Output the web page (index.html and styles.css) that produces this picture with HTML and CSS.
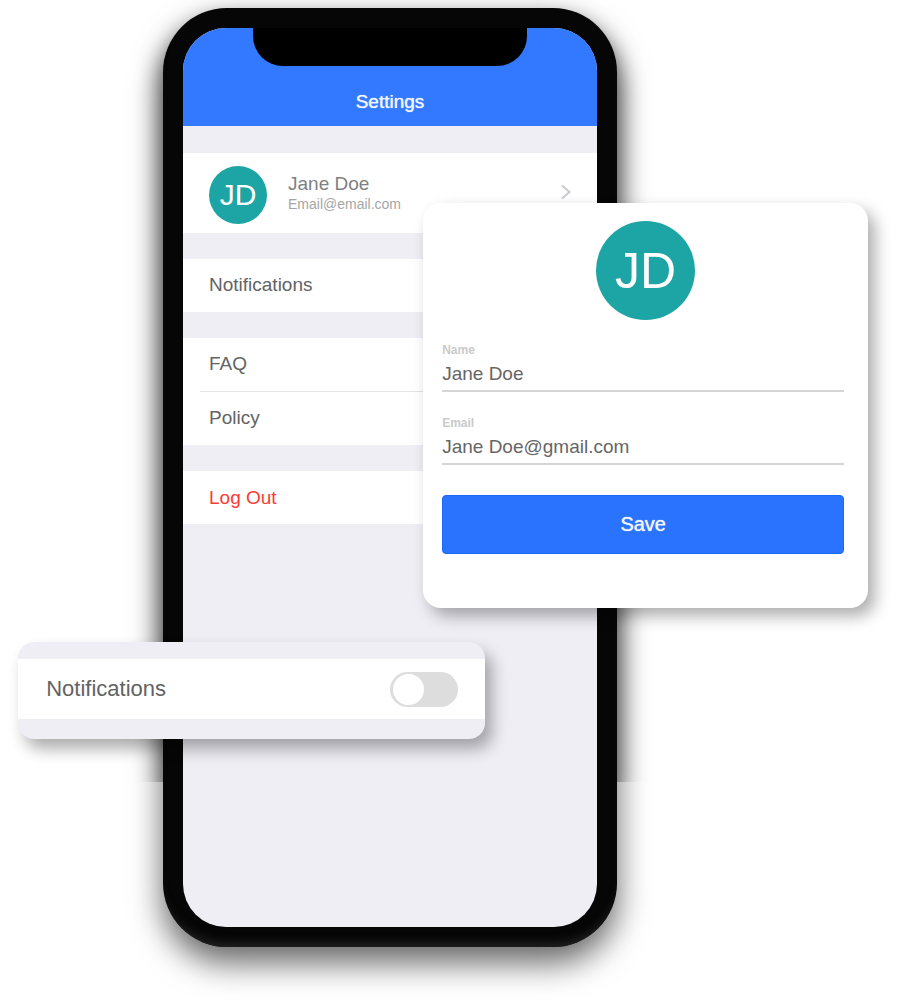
FILE: index.html
```html
<!DOCTYPE html>
<html lang="en">
<head>
<meta charset="utf-8">
<meta name="viewport" content="width=device-width, initial-scale=1">
<title>Settings</title>
<link rel="stylesheet" href="styles.css">
</head>
<body>
<main class="stage">
  <section class="phone">
    <div class="screen">
      <header class="topbar">
        <div class="notch"></div>
        <h1 class="title">Settings</h1>
      </header>
      <nav class="list">
        <a class="profile" href="#profile">
          <span class="avatar">JD</span>
          <span class="person">
            <span class="person-name">Jane Doe</span>
            <span class="person-email">Email@email.com</span>
          </span>
          <svg class="chevron" viewBox="0 0 10 16" aria-hidden="true"><path d="M1 1.5 8.5 8 1 14.5"/></svg>
        </a>
        <div class="group"><a class="row" href="#notifications">Notifications</a></div>
        <div class="group">
          <a class="row" href="#faq">FAQ</a>
          <hr class="divider">
          <a class="row" href="#policy">Policy</a>
        </div>
        <div class="group"><button class="row logout" type="button">Log Out</button></div>
      </nav>
    </div>
  </section>

  <section class="card editor">
    <div class="avatar avatar-large">JD</div>
    <form class="form">
      <div class="field">
        <label class="label" for="name">Name</label>
        <input class="input" id="name" type="text" value="Jane Doe">
      </div>
      <div class="field">
        <label class="label" for="email">Email</label>
        <input class="input" id="email" type="email" value="Jane Doe@gmail.com">
      </div>
      <button class="save" type="button">Save</button>
    </form>
  </section>

  <section class="card alerts">
    <div class="alerts-row">
      <label class="alerts-label" for="alerts">Notifications</label>
      <input class="switch" id="alerts" type="checkbox" role="switch">
    </div>
  </section>
</main>
</body>
</html>
```
FILE: styles.css
```css
* { box-sizing: border-box; }

body {
  margin: 0;
  background: #fff;
  color: #636363;
  font-family: "Liberation Sans", Arial, Helvetica, sans-serif;
  font-size: 19px;
}

.stage {
  position: relative;
  isolation: isolate;
  display: grid;
  grid-template-columns: 163fr 454fr 295fr;
  padding: 8px 0 53px;
}

.phone {
  grid-column: 2;
  position: relative;
  padding: 20px;
  border-radius: 64px;
  background: #060606;
  box-shadow:
    inset 0 -10px 10px -6px #222,
    0 16px 32px rgba(0, 0, 0, 0.6);
}

/* Deeper side shadow along the upper part of the body */
.phone::before {
  content: "";
  position: absolute;
  z-index: -1;
  inset: 0 0 165px;
  border-radius: 64px 64px 0 0;
  box-shadow: 0 14px 24px rgba(0, 0, 0, 0.6);
  clip-path: inset(-20px -40px 0 -40px);
}

.screen {
  min-height: 899px;
  overflow: hidden;
  border-radius: 43px;
  background: #efeef5;
}

.topbar {
  display: flex;
  flex-direction: column;
  align-items: center;
  height: 98px;
  background: #3279ff;
}

.notch {
  width: 66%;
  height: 38px;
  border-radius: 0 0 30px 30px;
  background: #000;
}

.title {
  margin: 24px 0 0;
  color: #f2f6ff;
  font-size: 19px;
  font-weight: 400;
  line-height: 24px;
  text-shadow: 0 0 1px #f2f6ff;
}

.list {
  display: flex;
  flex-direction: column;
  gap: 26px;
  padding-top: 27px;
}

.profile {
  display: flex;
  align-items: center;
  height: 80px;
  padding: 4px 26px 0;
  background: #fff;
  color: #808080;
  text-decoration: none;
}

.avatar {
  display: flex;
  flex: none;
  align-items: center;
  justify-content: center;
  width: 58px;
  height: 58px;
  border-radius: 50%;
  background: #1ca5a4;
  color: #fff;
  font-size: 30px;
}

.person {
  display: flex;
  flex: 1;
  flex-direction: column;
  margin-left: 21px;
  padding-bottom: 4px;
}

.person-name { line-height: 22px; }

.person-email {
  color: #a6a6a6;
  font-size: 14px;
  line-height: 18px;
}

.chevron {
  width: 10px;
  height: 16px;
  margin-bottom: 6px;
  fill: none;
  stroke: #c9c9d0;
  stroke-width: 2;
}

.group { background: #fff; }

.row {
  display: block;
  width: 100%;
  height: 53px;
  padding: 0 26px;
  border: 0;
  background: none;
  color: inherit;
  font: inherit;
  line-height: 52px;
  text-align: left;
  text-decoration: none;
}

.logout { color: #fa3c34; }

.divider {
  height: 1px;
  margin: 0 0 0 17px;
  border: 0;
  background: #e4e4e6;
}

.card {
  position: absolute;
  border-radius: 18px;
  background: #fff;
}

.editor {
  top: 203px;
  left: 46.4%;
  width: 48.8%;
  padding: 18px 0 54px;
  box-shadow: 7px 8px 16px rgba(0, 0, 0, 0.32);
}

.avatar-large {
  width: 99px;
  height: 99px;
  margin: 0 auto;
  font-size: 50px;
}

.form {
  display: flex;
  flex-direction: column;
  padding: 22px 24px 0 19px;
}

.field {
  display: flex;
  flex-direction: column;
  height: 73px;
}

.label {
  color: #cacaca;
  font-size: 12px;
  font-weight: 700;
  line-height: 16px;
}

.input {
  width: 100%;
  height: 34px;
  padding: 0;
  border: 0;
  border-bottom: 2px solid #d5d5d5;
  border-radius: 0;
  outline: 0;
  background: none;
  color: #666;
  font: inherit;
}

.save {
  height: 59px;
  margin-top: 7px;
  border: 1px solid #1a68fc;
  border-radius: 4px;
  background: #2a73ff;
  color: #f2f6ff;
  font: inherit;
  font-size: 20px;
  text-shadow: 0 0 1px #f2f6ff;
}

.alerts {
  top: 642px;
  left: 2%;
  width: 51.2%;
  padding: 17px 0 20px;
  border-radius: 16px;
  background: #efeef5;
  box-shadow: 7px 10px 16px rgba(0, 0, 0, 0.32);
}

.alerts-row {
  display: flex;
  align-items: center;
  justify-content: space-between;
  height: 60px;
  padding: 0 27px 0 28px;
  background: #fff;
}

.alerts-label { font-size: 22px; }

.switch {
  appearance: none;
  display: flex;
  align-items: center;
  width: 68px;
  height: 35px;
  margin: 0;
  padding: 0 3px;
  border-radius: 18px;
  background: #ddd;
}

.switch::before {
  content: "";
  width: 31px;
  height: 31px;
  border-radius: 50%;
  background: #fff;
}

.switch:checked {
  justify-content: flex-end;
  background: #2a73ff;
}
```
